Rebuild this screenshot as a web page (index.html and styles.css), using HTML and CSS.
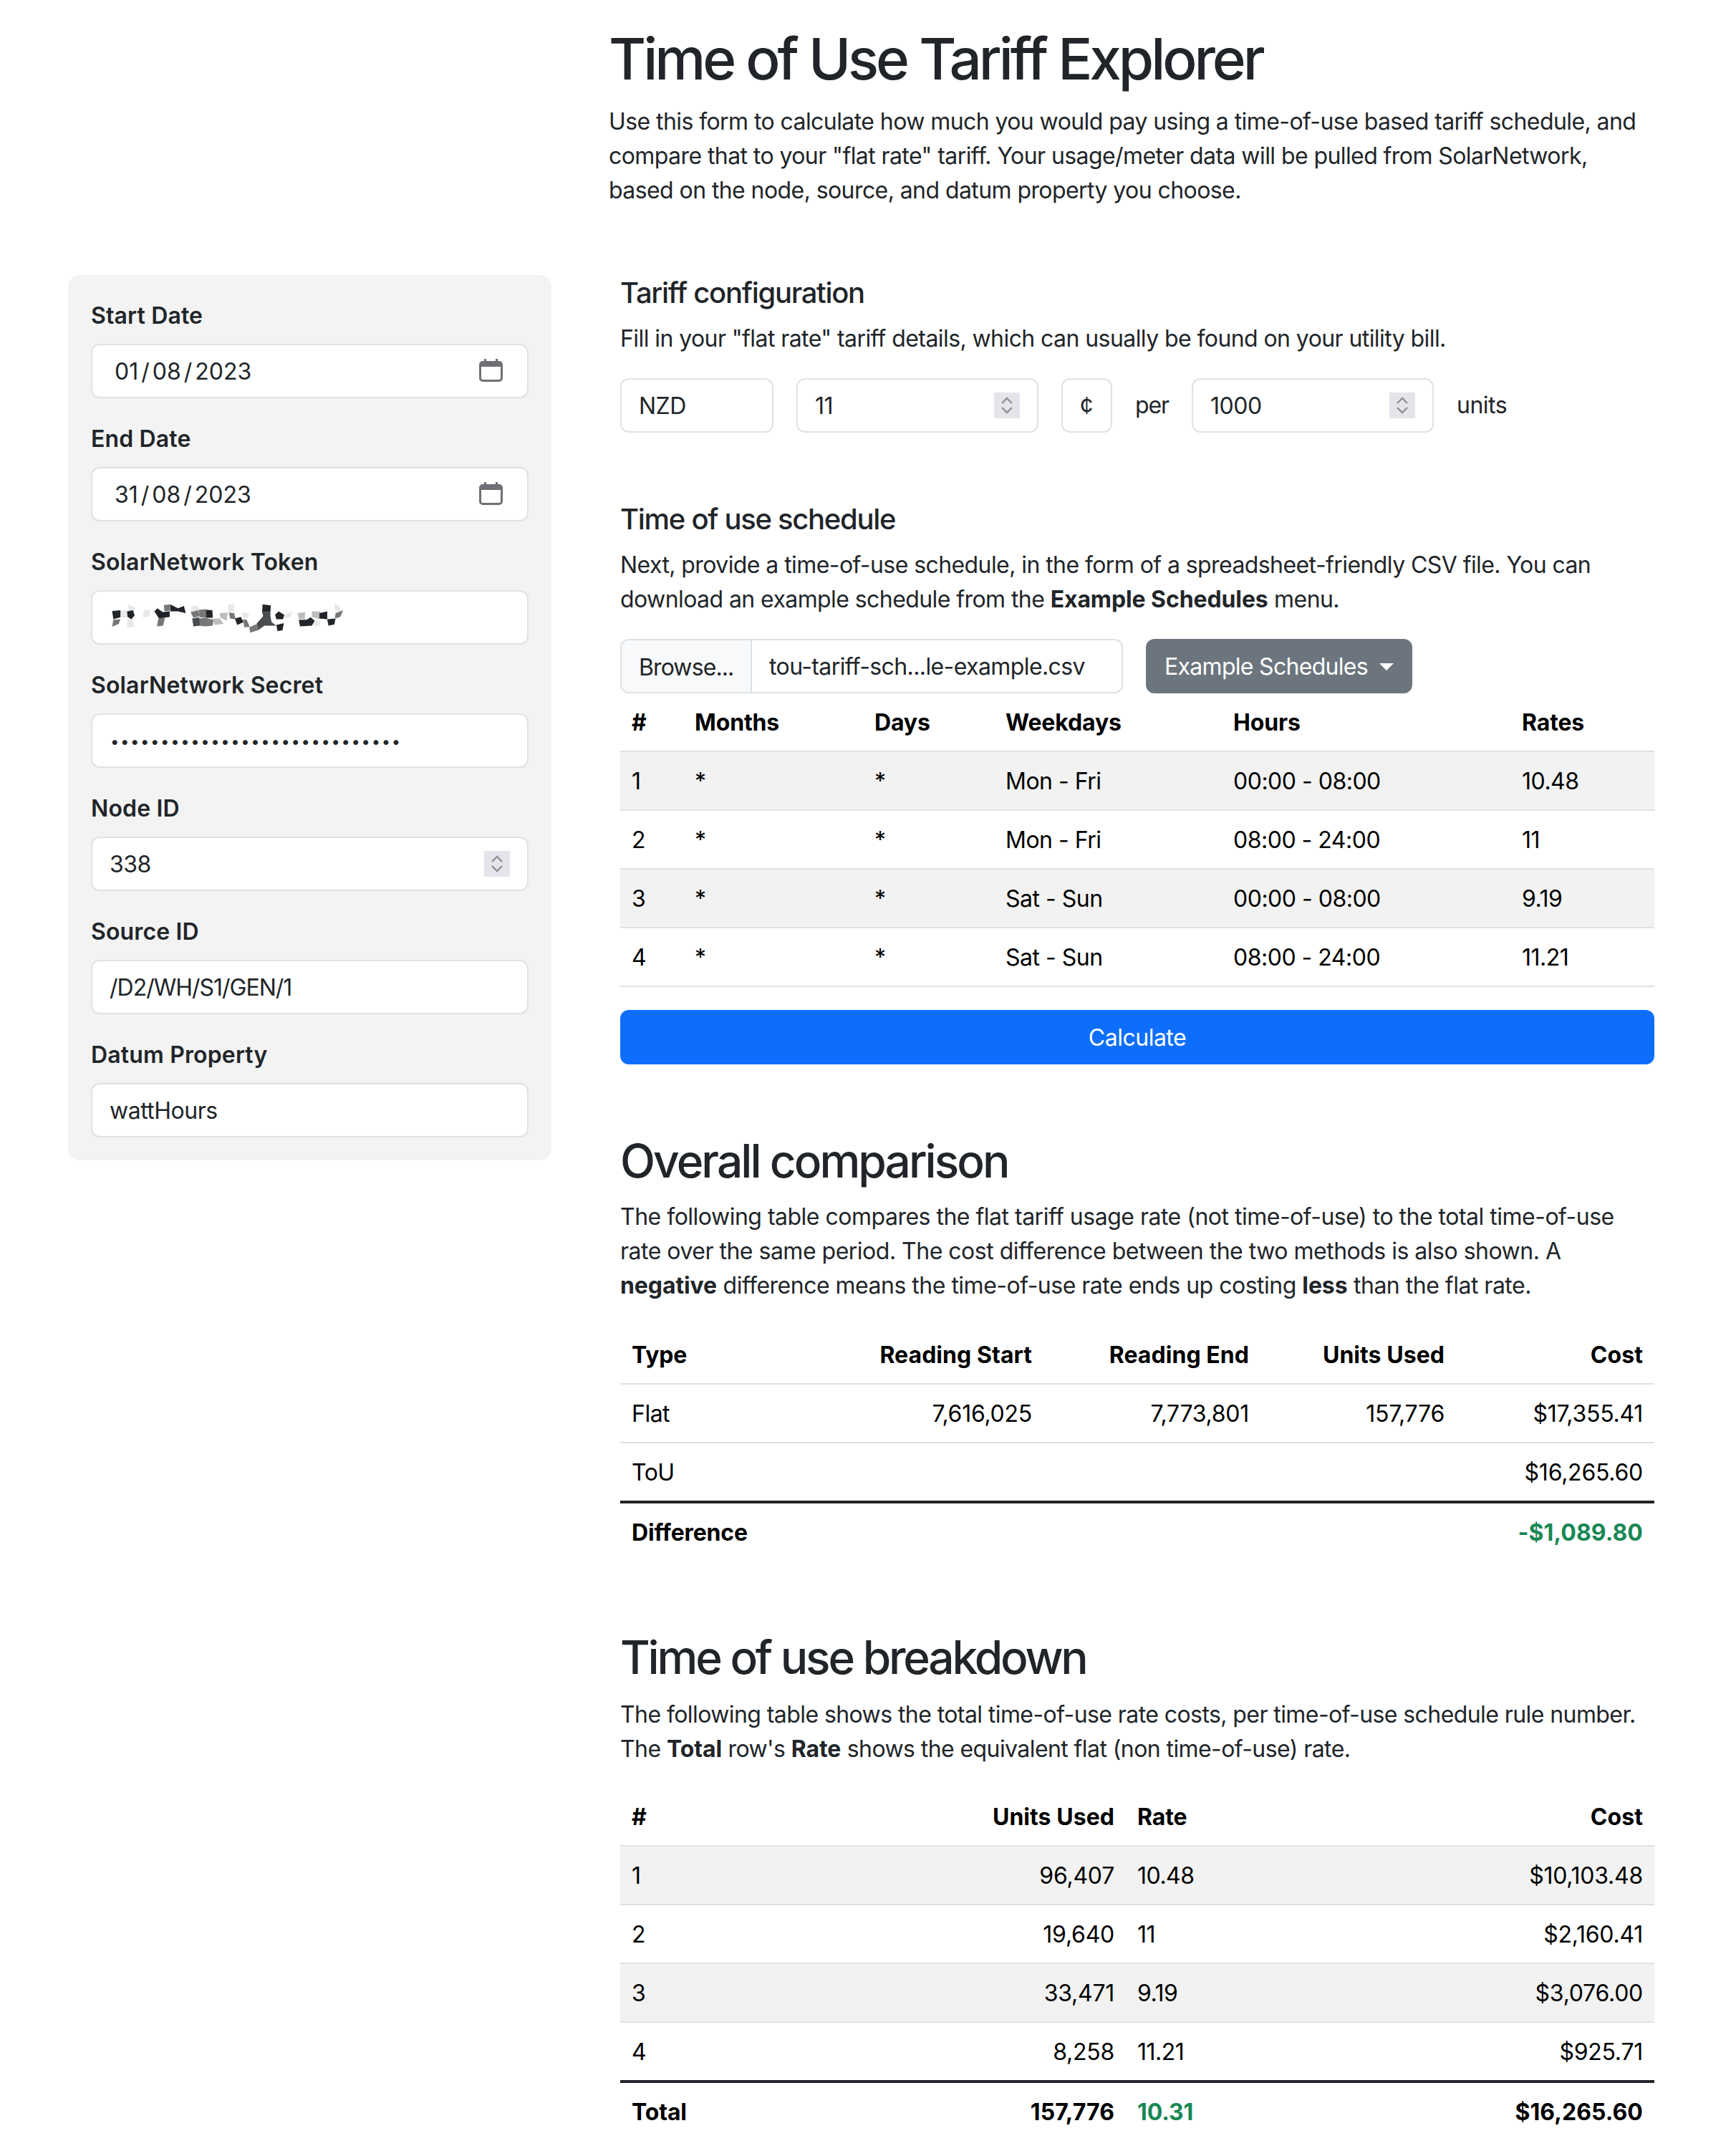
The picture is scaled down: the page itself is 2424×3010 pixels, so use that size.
FILE: index.html
```html
<!DOCTYPE html>
<html lang="en">

<head>
    <meta charset="utf-8">
    <title>Time of Use Tariff Explorer</title>
    <link rel="stylesheet" href="styles.css">
</head>

<body>
    <div class="page">
        <header class="intro">
            <h1>Time of Use Tariff Explorer</h1>
            <p>Use this form to calculate how much you would pay using a time-of-use based tariff schedule, and
                compare that to your "flat rate" tariff. Your usage/meter data will be pulled from SolarNetwork,
                based on the node, source, and datum property you choose.</p>
        </header>

        <aside class="sidebar">
            <div class="field">
                <div class="field-label">Start Date</div>
                <div class="input">
                    <span class="date-value"><span>01</span><i>/</i><span>08</span><i>/</i><span>2023</span></span>
                    <svg class="calendar" viewBox="0 0 33 32"><path d="M7 0h3v3h13V0h3v3h2a5 5 0 0 1 5 5v19a5 5 0 0 1-5 5H5a5 5 0 0 1-5-5V8a5 5 0 0 1 5-5h2zM3 11v16a2 2 0 0 0 2 2h23a2 2 0 0 0 2-2V11z"/></svg>
                </div>
            </div>
            <div class="field">
                <div class="field-label">End Date</div>
                <div class="input">
                    <span class="date-value"><span>31</span><i>/</i><span>08</span><i>/</i><span>2023</span></span>
                    <svg class="calendar" viewBox="0 0 33 32"><path d="M7 0h3v3h13V0h3v3h2a5 5 0 0 1 5 5v19a5 5 0 0 1-5 5H5a5 5 0 0 1-5-5V8a5 5 0 0 1 5-5h2zM3 11v16a2 2 0 0 0 2 2h23a2 2 0 0 0 2-2V11z"/></svg>
                </div>
            </div>
            <div class="field">
                <div class="field-label">SolarNetwork Token</div>
                <div class="input">
                    <svg class="mosaic" viewBox="90 70 990 130">
                        <g fill="#e9e9e9">
                            <polygon points="130,105 160,100 165,130 135,132"/>
                            <polygon points="165,75 195,90 190,105 165,100"/>
                            <polygon points="232,100 260,97 252,128 226,130"/>
                            <polygon points="160,138 182,135 192,168 160,175"/>
                            <polygon points="430,85 460,80 462,100 430,105"/>
                            <polygon points="585,78 612,72 612,108 588,108"/>
                            <polygon points="645,110 675,110 670,135 650,135"/>
                            <polygon points="825,120 858,105 850,128 828,135"/>
                            <polygon points="1035,72 1060,85 1058,105 1035,100"/>
                            <polygon points="945,140 975,145 972,165 948,168"/>
                        </g>
                        <g fill="#bdbdbd">
                            <polygon points="880,112 912,108 910,138 884,136"/>
                            <polygon points="940,105 975,105 972,138 940,128"/>
                            <polygon points="522,135 552,135 568,158 530,162"/>
                            <polygon points="550,112 585,110 580,145 555,132"/>
                        </g>
                        <g fill="#777">
                            <polygon points="102,140 132,138 125,158 97,170"/>
                            <polygon points="292,135 320,132 312,165 286,168"/>
                            <polygon points="315,78 342,75 340,102 318,105"/>
                            <polygon points="428,108 460,100 466,125 440,132"/>
                            <polygon points="462,98 492,96 494,132 466,130"/>
                            <polygon points="464,135 490,132 525,140 522,165 490,168 465,165"/>
                            <polygon points="590,110 612,112 618,138 595,135"/>
                            <polygon points="650,138 665,140 678,170 655,172"/>
                            <polygon points="676,172 708,158 712,185 680,195"/>
                            <polygon points="1040,112 1072,100 1060,128 1038,135"/>
                        </g>
                        <g fill="#4a4d50">
                            <polygon points="435,135 464,130 468,165 440,168"/>
                            <polygon points="708,155 735,125 765,125 770,150 790,165 740,165 712,185"/>
                            <polygon points="730,108 765,108 765,128 735,128"/>
                        </g>
                        <g fill="#212529">
                            <polygon points="97,103 132,100 132,130 102,138"/>
                            <polygon points="160,105 185,100 192,122 178,138 162,128"/>
                            <polygon points="275,105 288,92 310,108 340,105 340,128 295,135"/>
                            <polygon points="342,75 375,92 400,82 408,112 375,105 342,105"/>
                            <polygon points="492,98 520,100 522,132 494,132"/>
                            <polygon points="615,135 640,128 652,150 625,162"/>
                            <polygon points="732,75 767,80 765,108 730,108"/>
                            <polygon points="785,118 800,105 824,120 818,138 790,138"/>
                            <polygon points="790,162 822,155 816,185 795,188"/>
                            <polygon points="885,140 918,140 935,130 952,145 940,165 890,168"/>
                            <polygon points="972,112 1005,105 1005,138 972,135"/>
                            <polygon points="1005,138 1040,135 1035,160 1010,165"/>
                        </g>
                    </svg>
                </div>
            </div>
            <div class="field">
                <div class="field-label">SolarNetwork Secret</div>
                <div class="input"><span class="secret">•••••••••••••••••••••••••••••</span></div>
            </div>
            <div class="field">
                <div class="field-label">Node ID</div>
                <div class="input">
                    <span>338</span>
                    <svg class="spinner" viewBox="0 0 36 36"><path d="M11 15l7-7 7 7M11 21l7 7 7-7"/></svg>
                </div>
            </div>
            <div class="field">
                <div class="field-label">Source ID</div>
                <div class="input tight">/D2/WH/S1/GEN/1</div>
            </div>
            <div class="field">
                <div class="field-label">Datum Property</div>
                <div class="input">wattHours</div>
            </div>
        </aside>

        <main class="content">
            <section class="block-small">
                <h4>Tariff configuration</h4>
                <p class="lead-in">Fill in your "flat rate" tariff details, which can usually be found on your utility bill.</p>
                <div class="config-row">
                    <div class="input w-currency">NZD</div>
                    <div class="input w-number">
                        <span>11</span>
                        <svg class="spinner" viewBox="0 0 36 36"><path d="M11 15l7-7 7 7M11 21l7 7 7-7"/></svg>
                    </div>
                    <div class="input w-cent">¢</div>
                    <span class="per">per</span>
                    <div class="input w-number">
                        <span>1000</span>
                        <svg class="spinner" viewBox="0 0 36 36"><path d="M11 15l7-7 7 7M11 21l7 7 7-7"/></svg>
                    </div>
                    <span>units</span>
                </div>
            </section>

            <section class="block-small">
                <h4>Time of use schedule</h4>
                <p class="lead-in">Next, provide a time-of-use schedule, in the form of a spreadsheet-friendly CSV file. You can
                    download an example schedule from the <b>Example Schedules</b> menu.</p>
                <div class="file-row">
                    <div class="file-input">
                        <span class="file-btn">Browse...</span>
                        <span class="file-name">tou-tariff-sch...le-example.csv</span>
                    </div>
                    <div class="btn-secondary">Example Schedules<span class="caret"></span></div>
                </div>
                <table class="data striped schedule">
                    <colgroup>
                        <col class="s1"><col class="s2"><col class="s3"><col class="s4"><col class="s5"><col class="s6">
                    </colgroup>
                    <thead>
                        <tr><th>#</th><th>Months</th><th>Days</th><th>Weekdays</th><th>Hours</th><th>Rates</th></tr>
                    </thead>
                    <tbody>
                        <tr><td>1</td><td>*</td><td>*</td><td>Mon - Fri</td><td>00:00 - 08:00</td><td>10.48</td></tr>
                        <tr><td>2</td><td>*</td><td>*</td><td>Mon - Fri</td><td>08:00 - 24:00</td><td>11</td></tr>
                        <tr><td>3</td><td>*</td><td>*</td><td>Sat - Sun</td><td>00:00 - 08:00</td><td>9.19</td></tr>
                        <tr><td>4</td><td>*</td><td>*</td><td>Sat - Sun</td><td>08:00 - 24:00</td><td>11.21</td></tr>
                    </tbody>
                </table>
                <div class="btn-primary">Calculate</div>
            </section>

            <section class="block-large">
                <h2>Overall comparison</h2>
                <p class="lead-in">The following table compares the flat tariff usage rate (not time-of-use) to the total time-of-use
                    rate over the same period. The cost difference between the two methods is also shown. A
                    <b>negative</b> difference means the time-of-use rate ends up costing <b>less</b> than the flat rate.</p>
                <table class="data overall">
                    <colgroup>
                        <col class="o1"><col class="o2"><col class="o3"><col class="o4"><col class="o5">
                    </colgroup>
                    <thead>
                        <tr><th>Type</th><th class="num">Reading Start</th><th class="num">Reading End</th><th class="num">Units Used</th><th class="num">Cost</th></tr>
                    </thead>
                    <tbody>
                        <tr><td>Flat</td><td class="num">7,616,025</td><td class="num">7,773,801</td><td class="num">157,776</td><td class="num">$17,355.41</td></tr>
                        <tr><td>ToU</td><td></td><td></td><td></td><td class="num">$16,265.60</td></tr>
                    </tbody>
                    <tfoot>
                        <tr><th>Difference</th><th></th><th></th><th></th><th class="num good">-$1,089.80</th></tr>
                    </tfoot>
                </table>
            </section>

            <section class="block-last">
                <h2>Time of use breakdown</h2>
                <p class="lead-in">The following table shows the total time-of-use rate costs, per time-of-use schedule rule number.
                    The <b>Total</b> row's <b>Rate</b> shows the equivalent flat (non time-of-use) rate.</p>
                <table class="data striped breakdown">
                    <colgroup>
                        <col class="b1"><col class="b2"><col class="b3"><col class="b4">
                    </colgroup>
                    <thead>
                        <tr><th>#</th><th class="num">Units Used</th><th>Rate</th><th class="num">Cost</th></tr>
                    </thead>
                    <tbody>
                        <tr><td>1</td><td class="num">96,407</td><td>10.48</td><td class="num">$10,103.48</td></tr>
                        <tr><td>2</td><td class="num">19,640</td><td>11</td><td class="num">$2,160.41</td></tr>
                        <tr><td>3</td><td class="num">33,471</td><td>9.19</td><td class="num">$3,076.00</td></tr>
                        <tr><td>4</td><td class="num">8,258</td><td>11.21</td><td class="num">$925.71</td></tr>
                    </tbody>
                    <tfoot>
                        <tr><th>Total</th><th class="num">157,776</th><th class="good">10.31</th><th class="num">$16,265.60</th></tr>
                    </tfoot>
                </table>
            </section>
        </main>
    </div>
</body>

</html>
```
FILE: styles.css
```css
* {
    box-sizing: border-box;
}

body {
    margin: 0;
    background: #fff;
    color: #212529;
    font-family: Inter, "Liberation Sans", sans-serif;
    font-size: 32px;
    line-height: 48px;
    letter-spacing: -0.5px;
}

h1, h2, h4, p {
    margin: 0;
    font-weight: 500;
}

h1 {
    font-size: 80px;
    line-height: 96px;
    letter-spacing: -4.1px;
    margin-bottom: 16px;
}

h2 {
    font-size: 64px;
    line-height: 77px;
    letter-spacing: -2.95px;
    margin-bottom: 16px;
}

h4 {
    font-size: 40px;
    line-height: 48px;
    letter-spacing: -1.3px;
    padding-top: 1px;
    margin-bottom: 16px;
}

p {
    font-weight: 400;
    letter-spacing: -0.58px;
}

b {
    font-weight: 700;
    letter-spacing: -0.1px;
}

.page {
    display: grid;
    grid-template-columns: 675px 1460px;
    column-gap: 80px;
    padding: 34px 0 0 95px;
}

.intro {
    grid-column: 2;
    padding-bottom: 94px;
}

.sidebar {
    grid-column: 1;
    align-self: start;
    display: flex;
    flex-direction: column;
    gap: 32px;
    padding: 32px;
    background: #f3f3f3;
    border-radius: 16px;
}

.field-label {
    font-weight: 600;
    letter-spacing: 0.15px;
    padding-top: 1px;
    margin-bottom: 15px;
}

.input {
    display: flex;
    align-items: center;
    justify-content: space-between;
    height: 76px;
    padding: 2px 24px 0;
    background: #fff;
    border: 2px solid #dee2e6;
    border-radius: 12px;
    white-space: nowrap;
}

.input.tight {
    letter-spacing: -1px;
}

.date-value {
    display: flex;
    padding-left: 7px;
    letter-spacing: 0;
}

.date-value i {
    font-style: normal;
    margin: 0 4px;
}

.calendar {
    width: 33px;
    height: 32px;
    margin: -4px 10px 0 0;
    fill: #6f6f75;
}

.mosaic {
    width: 330px;
    height: 43px;
}

.secret {
    font-size: 22px;
    letter-spacing: 1.65px;
    padding-left: 1px;
}

.spinner {
    width: 36px;
    height: 36px;
    margin-top: -2px;
    background: #e4e4ea;
    fill: none;
    stroke: #8e8e93;
    stroke-width: 2.4;
}

.content {
    grid-column: 2;
    padding-left: 16px;
    width: 1460px;
}

.block-small {
    margin-bottom: 96px;
}

.block-large {
    margin-bottom: 96px;
}

.block-large .lead-in {
    letter-spacing: -0.5px;
}

.block-small .lead-in {
    margin-bottom: 31px;
}

.block-last h2 {
    letter-spacing: -3.2px;
    margin-bottom: 18px;
}

.block-last .lead-in {
    margin-bottom: 30px;
}

.lead-in {
    margin-bottom: 32px;
}

.config-row {
    display: flex;
    align-items: center;
    gap: 32px;
}

.per {
    letter-spacing: -1.1px;
}

.w-currency {
    width: 214px;
}

.w-number {
    width: 338px;
}

.w-cent {
    width: 71px;
}

.file-row {
    display: flex;
    gap: 32px;
}

.file-input {
    display: flex;
    width: 702px;
    height: 76px;
    align-items: center;
    border: 2px solid #dee2e6;
    border-radius: 12px;
    overflow: hidden;
}

.file-btn {
    width: 182px;
    height: 100%;
    padding: 2px 0 0 24px;
    line-height: 72px;
    letter-spacing: -0.9px;
    background: #f8f9fa;
    border-right: 2px solid #dee2e6;
}

.file-name {
    padding: 2px 0 0 24px;
    letter-spacing: -0.6px;
}

.btn-secondary {
    display: flex;
    align-items: center;
    height: 76px;
    padding: 2px 26px 0;
    background: #6c757d;
    color: #fff;
    letter-spacing: -0.7px;
    border-radius: 12px;
}

.caret {
    margin-left: 16px;
    border-top: 10px solid #fff;
    border-left: 10px solid transparent;
    border-right: 10px solid transparent;
}

.btn-primary {
    height: 76px;
    line-height: 78px;
    text-align: center;
    background: #0d6efd;
    color: #fff;
    border-radius: 12px;
}

table.data {
    width: 1444px;
    table-layout: fixed;
    border-collapse: collapse;
    color: #000;
}

.schedule {
    margin-bottom: 32px;
}

.data th,
.data td {
    padding: 17px 16px 15px;
    text-align: left;
    white-space: nowrap;
    border-bottom: 2px solid #dee2e6;
}

.data th {
    font-weight: 700;
    letter-spacing: -0.15px;
}

.data tfoot th {
    border-top: 4px solid #212529;
    border-bottom: 0;
}

.striped tbody tr:nth-child(odd) {
    background: #f2f2f2;
}

.data td.num {
    text-align: right;
    letter-spacing: -0.25px;
}

.data th.num {
    text-align: right;
    letter-spacing: 0.05px;
}

.data .good {
    color: #198754;
}

.s1 { width: 88px; }
.s2 { width: 251px; }
.s3 { width: 183px; }
.s4 { width: 318px; }
.s5 { width: 403px; }
.s6 { width: 201px; }

.o1 { width: 300px; }
.o2 { width: 291px; }
.o3 { width: 303px; }
.o4 { width: 273px; }
.o5 { width: 277px; }

.b1 { width: 200px; }
.b2 { width: 506px; }
.b3 { width: 428px; }
.b4 { width: 310px; }
```
